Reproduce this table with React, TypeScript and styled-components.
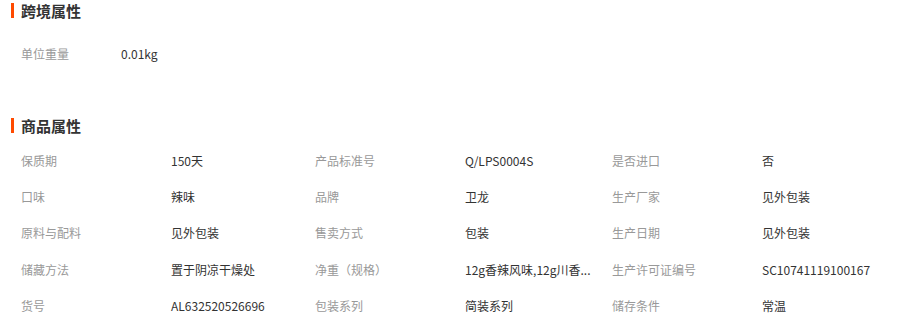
import { createGlobalStyle, styled } from 'styled-components';

const GlobalStyle = createGlobalStyle`
    body {
        margin: 0;
        background: #fff;
        font-family: 'Noto Sans CJK SC', 'Liberation Sans', sans-serif;
    }
`;

const Page = styled.div`
    width: 911px;
    height: 331px;
    overflow: hidden;
`;

const Section = styled.section<{ gap: number }>`
    display: flex;
    flex-direction: column;
    row-gap: ${({ gap }) => gap}px;
    margin-bottom: 44px;
`;

const Title = styled.h3`
    margin: 3px 0 6px 11px;
    padding-left: 7px;
    border-left: 3px solid #ff4a00;
    height: 15px;
    line-height: 15px;
    font-size: 15px;
    font-weight: 700;
    color: #333;
`;

const Grid = styled.div<{ columns: string }>`
    display: grid;
    grid-template-columns: ${({ columns }) => columns};
    grid-auto-rows: 36.25px;
    padding-left: 21px;
    font-size: 12px;
`;

const Label = styled.span`
    display: flex;
    align-items: center;
    color: #999;
`;

const Value = styled.span`
    display: flex;
    align-items: center;
    color: #333;
    white-space: nowrap;
`;

const crossBorder = [['单位重量', '0.01kg']];

const goods = [
    ['保质期', '150天'],
    ['产品标准号', 'Q/LPS0004S'],
    ['是否进口', '否'],
    ['口味', '辣味'],
    ['品牌', '卫龙'],
    ['生产厂家', '见外包装'],
    ['原料与配料', '见外包装'],
    ['售卖方式', '包装'],
    ['生产日期', '见外包装'],
    ['储藏方法', '置于阴凉干燥处'],
    ['净重（规格）', '12g香辣风味,12g川香...'],
    ['生产许可证编号', 'SC10741119100167'],
    ['货号', 'AL632520526696'],
    ['包装系列', '简装系列'],
    ['储存条件', '常温']
];

const App = () => (
    <Page>
        <GlobalStyle />
        <Section gap={11}>
            <Title>跨境属性</Title>
            <Grid columns="100px 1fr">
                {crossBorder.map(([k, v]) => [<Label key={k}>{k}</Label>, <Value key={k + 'v'}>{v}</Value>])}
            </Grid>
        </Section>
        <Section gap={3}>
            <Title>商品属性</Title>
            <Grid columns="150px 144px 150px 147px 150px 1fr">
                {goods.map(([k, v]) => [<Label key={k}>{k}</Label>, <Value key={k + 'v'}>{v}</Value>])}
            </Grid>
        </Section>
    </Page>
);

export default App;
